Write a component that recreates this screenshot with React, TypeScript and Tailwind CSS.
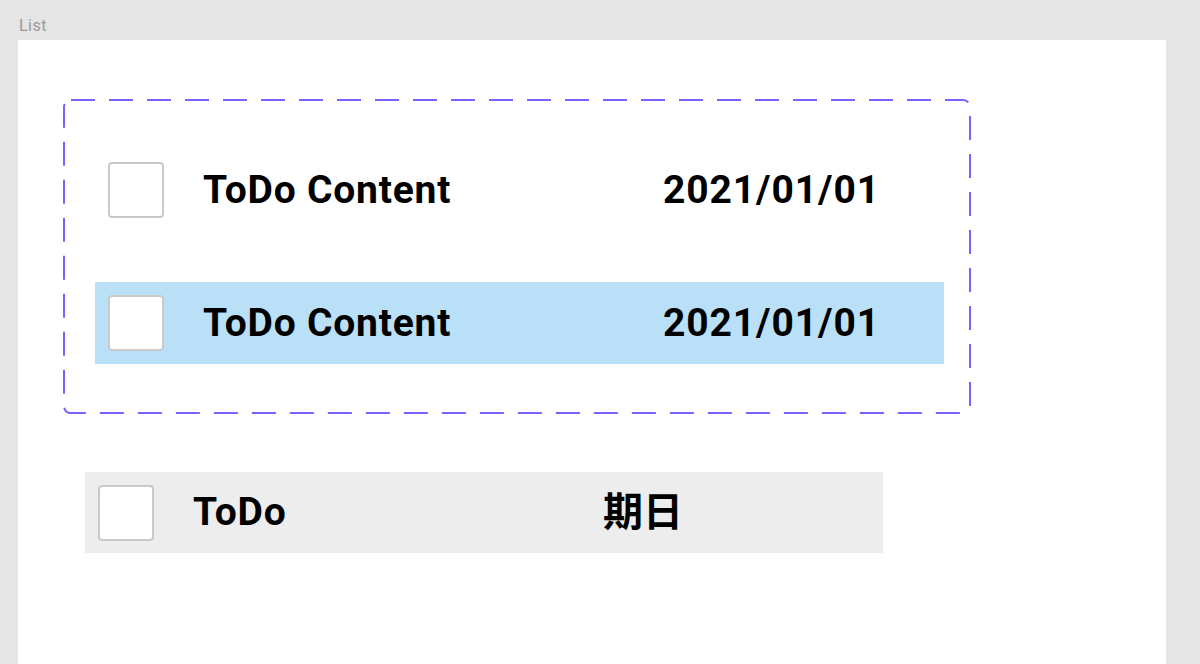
import React from "react";

const font = { fontFamily: "Roboto, 'Noto Sans CJK JP', sans-serif" };

function Checkbox() {
  return <div className="h-14 w-14 shrink-0 rounded-[4px] border-2 border-[#c9c9c9] bg-white" />;
}

function TodoRow({ selected }: { selected?: boolean }) {
  return (
    <div
      className={`flex h-[82px] w-[849px] items-center pl-[13px] ${selected ? "bg-[#bae0f8]" : "bg-white"}`}
    >
      <Checkbox />
      <div className="ml-[39px] w-[460px] text-[39px] font-bold leading-none tracking-[0.8px] text-black">
        ToDo Content
      </div>
      <div className="text-[39px] font-bold leading-none tracking-[0.9px] text-black">2021/01/01</div>
    </div>
  );
}

export default function App() {
  return (
    <div className="min-h-[664px] overflow-hidden bg-[#e5e5e5] pl-[18px]" style={font}>
      <div className="pt-[16px] pl-px text-[16px] leading-[20px] tracking-[0.5px] text-[#999999]">List</div>
      <div className="mt-[4px] h-[640px] w-[1148px] bg-white pt-[59px] pl-[45px]">
        {/* component set with dashed outline */}
        <div className="relative flex h-[315px] w-[908px] flex-col gap-[51px] pt-[50px] pl-[32px]">
          <svg className="absolute inset-0" width="908" height="315" viewBox="0 0 908 315">
            <rect
              x="1"
              y="1"
              width="906"
              height="313"
              rx="7"
              fill="none"
              stroke="#7b61ff"
              strokeWidth="2"
              strokeDasharray="24 14"
            />
          </svg>
          <TodoRow />
          <TodoRow selected />
        </div>

        {/* header */}
        <div className="mt-[58px] ml-[22px] flex h-[81px] w-[798px] items-center bg-[#ededed] pl-[13px]">
          <Checkbox />
          <div className="ml-[39px] w-[410px] text-[39px] font-bold leading-none tracking-[0.8px] text-black">
            ToDo
          </div>
          <div className="text-[40px] font-bold leading-none text-black">期日</div>
        </div>
      </div>
    </div>
  );
}
